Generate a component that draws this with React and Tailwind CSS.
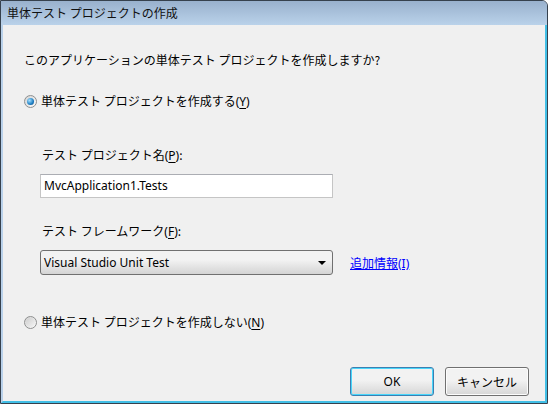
const font = { fontFamily: '"Noto Sans CJK JP", "Noto Sans", sans-serif' }
const latin = { fontFamily: '"Noto Sans", "Noto Sans CJK JP", sans-serif' }

function Radio({ checked }) {
  return (
    <span className="relative inline-flex h-[13px] w-[13px] items-center justify-center rounded-full border border-[#8e8f8f] bg-gradient-to-br from-[#d4d4d4] to-[#fbfbfb]">
      {checked ? (
        <span className="h-[7px] w-[7px] rounded-full bg-[radial-gradient(circle_at_35%_35%,#a6e0ff,#1c7ec2_60%,#0a3f78)]" />
      ) : (
        <span className="h-[9px] w-[9px] rounded-full bg-gradient-to-br from-[#cfcfcf] to-[#f4f4f4]" />
      )}
    </span>
  )
}

function Key({ k }) {
  return (
    <span style={latin} className="leading-none">
      (<span className="underline underline-offset-2">{k}</span>)
    </span>
  )
}

export default function App() {
  return (
    <div
      style={font}
      className="flex h-[404px] w-[548px] flex-col overflow-hidden rounded-tr-[6px] border border-[#36414d] bg-[#b9d1ea] text-[12px] leading-[16px] text-black"
    >
      <div className="flex h-[24px] shrink-0 items-center bg-gradient-to-b from-[#99b1cd] to-[#bad2ea] pl-[6px] text-[12px] text-[#111]">
        単体テスト プロジェクトの作成
      </div>
      <div className="flex flex-1 border-r-2 border-b-2 border-l-2 border-r-[#41bfe6] border-b-[#41bfe6] border-l-[#b9d1ea]">
        <div className="flex flex-1 flex-col bg-[#f0f0f0] pl-[21px] pt-[27px]">
          <p>このアプリケーションの単体テスト プロジェクトを作成しますか?</p>

          <label className="mt-[25px] flex h-[16px] items-center gap-[4px]">
            <Radio checked />
            <span>
              単体テスト プロジェクトを作成する<Key k="Y" />
            </span>
          </label>

          <div className="ml-[16px] mt-[38px] flex flex-col">
            <span className="h-[16px] pl-[2px]">
              テスト プロジェクト名<Key k="P" />:
            </span>
            <div
              style={latin}
              className="mt-[11px] flex h-[24px] w-[293px] items-center border border-[#c5c5c5] border-t-[#abadb3] bg-white px-[3px] text-[12px]"
            >
              MvcApplication1.Tests
            </div>

            <span className="mt-[25px] h-[16px] pl-[2px]">
              テスト フレームワーク<Key k="F" />:
            </span>
            <div className="mt-[11px] flex items-center gap-[17px]">
              <div
                style={latin}
                className="flex h-[25px] w-[293px] items-center justify-between rounded-[3px] border border-[#707070] bg-gradient-to-b from-[#f2f2f2] from-40% to-[#d4d4d4] pl-[3px] pr-[6px] text-[12px]"
              >
                <span>Visual Studio Unit Test</span>
                <span className="h-0 w-0 border-x-[4px] border-t-[4px] border-x-transparent border-t-black" />
              </div>
              <a className="text-[#0000ff] underline">
                追加情報<span style={latin} className="leading-none">(I)</span>
              </a>
            </div>
          </div>

          <label className="mt-[39px] flex h-[16px] items-center gap-[4px]">
            <Radio />
            <span>
              単体テスト プロジェクトを作成しない<Key k="N" />
            </span>
          </label>

          <div className="mt-[37px] flex justify-end gap-[11px] pr-[16px]">
            <button
              style={latin}
              className="h-[29px] w-[84px] rounded-[3px] border border-[#3c7fb1] bg-gradient-to-b from-[#f2f2f2] from-45% to-[#d6d6d6] shadow-[inset_0_0_0_1px_#48d6fb]"
            >
              OK
            </button>
            <button className="h-[29px] w-[84px] rounded-[3px] border border-[#707070] bg-gradient-to-b from-[#f2f2f2] from-45% to-[#d6d6d6] shadow-[inset_0_0_0_1px_#fcfcfc]">
              キャンセル
            </button>
          </div>
        </div>
      </div>
    </div>
  )
}
